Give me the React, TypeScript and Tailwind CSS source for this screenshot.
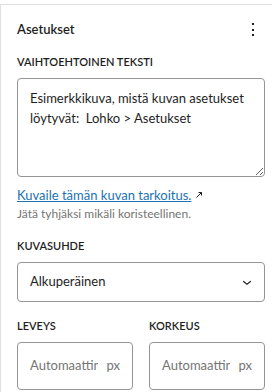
import { useState } from 'react'

const font = { fontFamily: 'Lato, Roboto, sans-serif' }

function Label({ children }: { children: string }) {
  return <div className="text-[11px] leading-4 font-semibold uppercase text-[#1e1e1e]">{children}</div>
}

function SizeInput({ label }: { label: string }) {
  return (
    <div className="w-[116px]">
      <Label>{label}</Label>
      <div className="mt-2 flex h-12 items-center rounded-sm border border-[#949494] bg-white">
        <input
          placeholder="Automaattinen"
          className="w-[80px] min-w-0 bg-transparent pl-3 text-[13px] text-[#1e1e1e] outline-none placeholder:text-[#757575]"
        />
        <span className="ml-auto pr-3 text-[13px] text-[#757575]">px</span>
      </div>
    </div>
  )
}

export default function App() {
  const [alt, setAlt] = useState('Esimerkkikuva, mistä kuvan asetukset löytyvät:  Lohko > Asetukset')

  return (
    <div className="h-[392px] w-[272px] overflow-hidden bg-white pt-1" style={font}>
      <div className="h-full border-l border-t border-[#e0e0e0] pl-4 pt-[15px]">
        <div className="w-[248px]">
          {/* Header */}
          <div className="flex h-5 items-center justify-between">
            <h2 className="text-[13px] font-semibold text-[#1e1e1e]">Asetukset</h2>
            <button className="flex h-6 w-6 items-center justify-center">
              <svg width="24" height="24" viewBox="0 0 24 24" fill="#1e1e1e">
                <rect x="11" y="5" width="2" height="2" />
                <rect x="11" y="11" width="2" height="2" />
                <rect x="11" y="16" width="2" height="2" />
              </svg>
            </button>
          </div>

          {/* Alt text */}
          <div className="mt-[14px]">
            <Label>Vaihtoehtoinen teksti</Label>
            <textarea
              value={alt}
              onChange={(e) => setAlt(e.target.value)}
              className="mt-2 block h-[99px] w-full rounded-sm border border-[#949494] px-3 pt-[9px] text-[13px] leading-5 text-[#1e1e1e] outline-none"
            />
            <div className="mt-2 flex items-center gap-1 text-[13px] leading-5">
              <a href="#" className="text-[#2271b1] underline">Kuvaile tämän kuvan tarkoitus.</a>
              <svg width="8" height="8" viewBox="0 0 8 8" fill="none" stroke="#1e1e1e" strokeWidth="1">
                <path d="M1.5 6.5L6.5 1.5M3.5 1.5h3v3" />
              </svg>
            </div>
            <p className="mt-px text-[12px] leading-4 text-[#757575]">Jätä tyhjäksi mikäli koristeellinen.</p>
          </div>

          {/* Aspect ratio */}
          <div className="mt-4">
            <Label>Kuvasuhde</Label>
            <div className="mt-2 flex h-10 items-center justify-between rounded-sm border border-[#949494] pl-3 pr-2">
              <span className="text-[13px] text-[#1e1e1e]">Alkuperäinen</span>
              <svg width="18" height="18" viewBox="0 0 24 24" fill="#1e1e1e">
                <path d="M17.5 11.6L12 16l-5.5-4.4.9-1.2L12 14l4.6-3.6 1 1.2z" />
              </svg>
            </div>
          </div>

          {/* Dimensions */}
          <div className="mt-4 flex gap-4">
            <SizeInput label="Leveys" />
            <SizeInput label="Korkeus" />
          </div>
        </div>
      </div>
    </div>
  )
}
